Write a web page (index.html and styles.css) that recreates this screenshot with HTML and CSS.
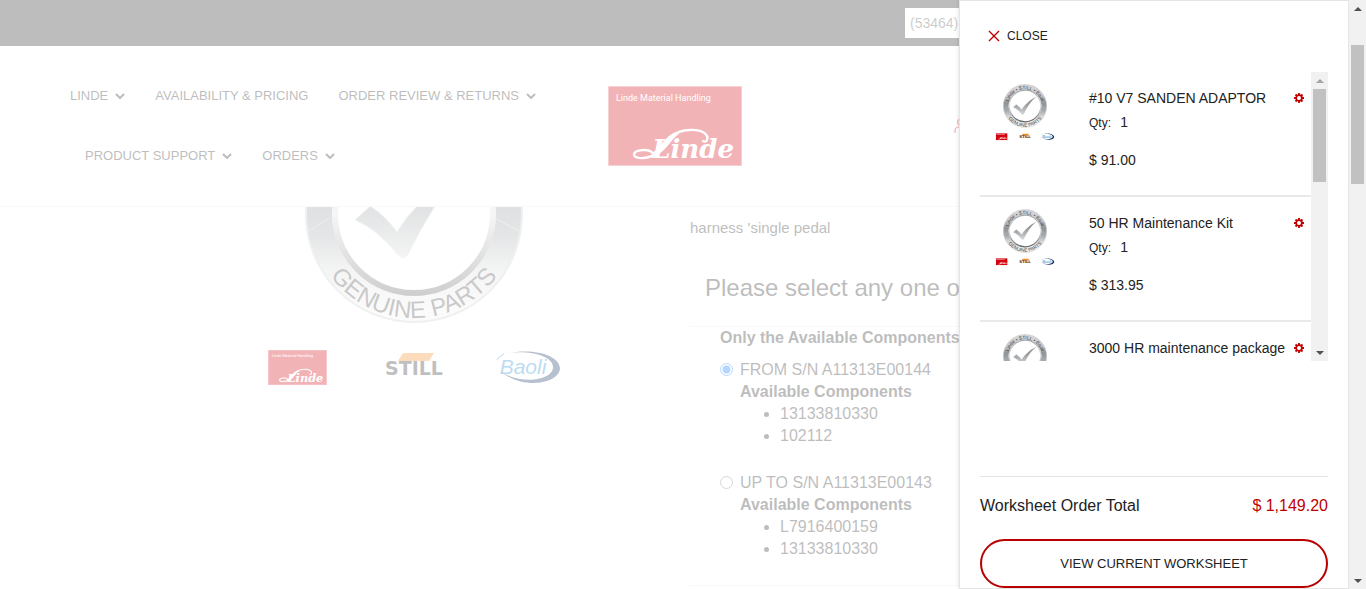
FILE: index.html
```html
<!DOCTYPE html>
<html lang="en">
<head>
<meta charset="utf-8">
<title>Linde Worksheet</title>
<link rel="stylesheet" href="styles.css">
</head>
<body>
<svg class="defs" width="0" height="0" aria-hidden="true">
  <defs>
    <linearGradient id="ring" x1="0" y1="0" x2="0" y2="1">
      <stop offset="0" stop-color="#d4d6d7"/>
      <stop offset=".25" stop-color="#c2c4c6"/>
      <stop offset=".42" stop-color="#8f9396"/>
      <stop offset=".62" stop-color="#a6aaad"/>
      <stop offset=".8" stop-color="#dcdddd"/>
      <stop offset="1" stop-color="#f0f0f0"/>
    </linearGradient>
    <linearGradient id="rim" x1="0" y1="0" x2="0" y2="1">
      <stop offset="0" stop-color="#a5a8aa"/>
      <stop offset=".5" stop-color="#dfe1e2"/>
      <stop offset="1" stop-color="#606060"/>
    </linearGradient>
    <linearGradient id="tick" x1="0" y1="0" x2="0" y2="1">
      <stop offset="0" stop-color="#777b7e"/>
      <stop offset=".5" stop-color="#a0a4a7"/>
      <stop offset="1" stop-color="#d8dadb"/>
    </linearGradient>
    <path id="arc-top" d="M66 110a84 84 0 0 1 168 0"/>
    <path id="arc-bottom" d="M46 110a104 104 0 0 0 208 0"/>
    <symbol id="linde" viewBox="0 0 134 80">
      <rect width="134" height="80" fill="#d4000f"/>
      <rect x=".5" y=".5" width="133" height="79" fill="none" stroke="#e36a70"/>
      <text x="8" y="15" font-family="Roboto, sans-serif" font-size="9" fill="#fff">Linde Material Handling</text>
      <text x="126" y="72" text-anchor="end" font-family="DejaVu Serif, serif" font-size="26" font-style="italic" font-weight="700" fill="#fff">Linde</text>
      <path d="M45 67C40 62 27 64 26 68c0 6 14 5 21 0C55 62 60 45 81 44c14-1 20 5 18 10-1 2-3 2-4 1" fill="none" stroke="#fff" stroke-width="2.4" stroke-linecap="round"/>
      <path d="M43 68C52 62 57 50 68 46l3 2C64 52 60 62 51 68z" fill="#fff"/>
    </symbol>
    <symbol id="genuine" viewBox="0 0 300 290">
      <circle cx="150" cy="110" r="95" fill="none" stroke="url(#ring)" stroke-width="27"/>
      <circle cx="150" cy="110" r="108" fill="none" stroke="#c9cccd" stroke-width="2"/>
      <circle cx="150" cy="110" r="79" fill="none" stroke="url(#rim)" stroke-width="6"/>
      <path d="M43 128l23-14M257 128l-26-14" stroke="#c6c9ca" stroke-width="1"/>
      <path d="M91 116l15-14q15 9 27 26q8-14 20-26 22-23 53-38-22 19-36 40-14 22-26 46-4 7-10 1-20-25-43-35z" fill="url(#tick)" stroke="#d9dbdc" stroke-width="1"/>
      <g font-family="Liberation Sans, sans-serif" font-size="24" fill="#4a4a4a" text-anchor="middle">
        <text><textPath href="#arc-top" startOffset="50%">Linde • STILL • Baoli</textPath></text>
        <text><textPath href="#arc-bottom" startOffset="50%">GENUINE PARTS</textPath></text>
      </g>
      <use href="#linde" x="4" y="246" width="59" height="35"/>
      <path d="M139 249h31l-5 8h-31z" fill="#f68b1f"/>
      <text x="150" y="271" text-anchor="middle" font-family="DejaVu Sans, sans-serif" font-size="19" font-weight="700" fill="#2b2b2b">STILL</text>
      <text x="259" y="270" text-anchor="middle" font-family="Liberation Sans, sans-serif" font-size="21" font-style="italic" fill="#1689cc">Baoli</text>
      <path d="M244 249c26-5 51 2 52 15 0 15-36 23-60 3 20 14 53 10 53-4 0-11-23-17-45-14z" fill="#0c2c5c"/>
      <path d="M240 250q-6 3-7 6" fill="none" stroke="#1689cc" stroke-width="1"/>
    </symbol>
    <symbol id="chevron" viewBox="0 0 10 6"><path d="M1 1l4 4 4-4" fill="none" stroke="currentColor" stroke-width="2"/></symbol>
    <symbol id="gear" viewBox="0 0 20 20">
      <circle cx="10" cy="10" r="5.7" fill="none" stroke="currentColor" stroke-width="3.4"/>
      <path d="M10 0v4M10 16v4M0 10h4M16 10h4M3 3l3 3M14 14l3 3M17 3l-3 3M6 14l-3 3" stroke="currentColor" stroke-width="3.6"/>
    </symbol>
    <symbol id="up" viewBox="0 0 8 4"><path d="M0 4l4-4 4 4z" fill="currentColor"/></symbol>
    <symbol id="down" viewBox="0 0 8 4"><path d="M0 0l4 4 4-4z" fill="currentColor"/></symbol>
  </defs>
</svg>

<div class="site">
  <div class="topbar">
    <input class="account" type="text" value="(53464)" aria-label="Account">
  </div>
  <header class="header">
    <nav class="nav">
      <a href="#">LINDE <svg><use href="#chevron"/></svg></a>
      <a href="#">AVAILABILITY &amp; PRICING</a>
      <a href="#">ORDER REVIEW &amp; RETURNS <svg><use href="#chevron"/></svg></a>
      <a href="#">PRODUCT SUPPORT <svg><use href="#chevron"/></svg></a>
      <a href="#">ORDERS <svg><use href="#chevron"/></svg></a>
    </nav>
    <a class="logo" href="#" aria-label="Linde home"><svg><use href="#linde"/></svg></a>
    <a class="user" href="#" aria-label="My account">
      <svg viewBox="0 0 14 16"><circle cx="7" cy="4" r="3.3"/><path d="M1 15v-2q0-4 4-4h4q4 0 4 4v2"/></svg>
    </a>
  </header>
  <main class="product">
    <div class="gallery"><svg><use href="#genuine"/></svg></div>
    <section class="details">
      <p class="desc">harness 'single pedal</p>
      <h2>Please select any one of the options</h2>
      <div class="options">
        <p class="note">Only the Available Components will be added</p>
        <div class="option">
          <input type="radio" name="serial" id="sn1" checked>
          <div>
            <label for="sn1">FROM S/N A11313E00144</label>
            <b>Available Components</b>
            <ul><li>13133810330</li><li>102112</li></ul>
          </div>
        </div>
        <div class="option">
          <input type="radio" name="serial" id="sn2">
          <div>
            <label for="sn2">UP TO S/N A11313E00143</label>
            <b>Available Components</b>
            <ul><li>L7916400159</li><li>13133810330</li></ul>
          </div>
        </div>
      </div>
    </section>
  </main>
  <div class="overlay"></div>

  <aside class="drawer">
    <button class="close" type="button">
      <svg viewBox="0 0 12 12"><path d="M1 1l10 10M11 1L1 11"/></svg>CLOSE
    </button>
    <div class="cart">
      <div class="items">
        <article class="item">
          <svg class="thumb"><use href="#genuine"/></svg>
          <div class="info">
            <h3>#10 V7 SANDEN ADAPTOR</h3>
            <p class="qty">Qty: <span>1</span></p>
            <p class="price">$ 91.00</p>
          </div>
          <button class="edit" type="button" aria-label="Options"><svg><use href="#gear"/></svg></button>
        </article>
        <article class="item">
          <svg class="thumb"><use href="#genuine"/></svg>
          <div class="info">
            <h3>50 HR Maintenance Kit</h3>
            <p class="qty">Qty: <span>1</span></p>
            <p class="price">$ 313.95</p>
          </div>
          <button class="edit" type="button" aria-label="Options"><svg><use href="#gear"/></svg></button>
        </article>
        <article class="item">
          <svg class="thumb"><use href="#genuine"/></svg>
          <div class="info">
            <h3>3000 HR maintenance package</h3>
          </div>
          <button class="edit" type="button" aria-label="Options"><svg><use href="#gear"/></svg></button>
        </article>
      </div>
      <div class="bar bar-list" aria-hidden="true">
        <svg class="faded"><use href="#up"/></svg><i></i><svg><use href="#down"/></svg>
      </div>
    </div>
    <div class="summary">
      <div class="total"><span>Worksheet Order Total</span><strong>$ 1,149.20</strong></div>
      <a class="view" href="#">VIEW CURRENT WORKSHEET</a>
    </div>
  </aside>
</div>
<div class="bar bar-page" aria-hidden="true">
  <svg><use href="#up"/></svg><i></i><svg><use href="#down"/></svg>
</div>
</body>
</html>
```

FILE: styles.css
```css
* { box-sizing: border-box; }
body {
  margin: 0;
  display: flex;
  height: 100vh;
  overflow: hidden;
  font: 16px/22px "Liberation Sans", Arial, sans-serif;
  color: #222;
  background: #fff;
}
p, h2, h3, ul { margin: 0; font-weight: 400; }
a { color: inherit; text-decoration: none; }
button { padding: 0; border: 0; background: none; font: inherit; color: inherit; }
svg { display: block; }
.defs { position: absolute; }

.site {
  position: relative;
  flex: 1;
  min-width: 0;
  display: flex;
  flex-direction: column;
  overflow: hidden;
}
.overlay { position: absolute; inset: 0; background: rgba(255, 255, 255, .7); }

.topbar { display: flex; justify-content: flex-end; padding: 8px 70px 8px 0; background: #222; }
.account {
  width: 374px;
  height: 30px;
  padding: 0 5px;
  border: 0;
  background: #fff;
  color: #555;
  font: 14px "Liberation Sans", Arial, sans-serif;
}

.header {
  display: grid;
  grid-template-columns: 1fr 134px 1fr;
  align-items: center;
  padding: 20px 0;
  border-bottom: 1px solid #eaeaea;
  background: #fff;
}
.nav { display: flex; flex-wrap: wrap; padding-left: 70px; font-size: 13px; line-height: 60px; }
.nav a { display: flex; align-items: center; gap: 7px; padding: 0 15px; }
.nav a:first-child { padding-left: 0; }
.nav svg { width: 10px; height: 6px; }
.logo svg { width: 134px; height: 80px; }
.user { padding-left: 212px; color: #c00; }
.user svg { width: 14px; height: 16px; fill: none; stroke: currentColor; stroke-width: 1.2; }

.product { flex: 1; min-height: 0; display: flex; overflow: hidden; }
.gallery { width: 690px; padding-left: 264px; }
.gallery svg { width: 300px; height: 290px; margin-top: -103px; }
.details { flex: 1; min-width: 0; white-space: nowrap; }
.desc { padding-top: 10px; font-size: 15px; }
.details h2 { padding: 33px 15px 22px; font-size: 24px; line-height: 32px; }
.options { padding: 0 30px 25px; border: solid #eaeaea; border-width: 1px 0; }
.note { font-weight: 700; }
.option { display: flex; gap: 7px; padding-top: 10px; }
.option + .option { padding-top: 25px; }
.option input { width: 13px; height: 13px; margin: 4px 0 0; }
.option label, .option b { display: block; }
.option ul { padding-left: 40px; }

.drawer {
  position: absolute;
  top: 0;
  right: 0;
  bottom: 0;
  width: 390px;
  display: flex;
  flex-direction: column;
  padding: 25px 20px 0;
  border: 1px solid #e5e5e5;
  background: #fff;
  box-shadow: 0 0 4px rgba(0, 0, 0, .15);
}
.close { display: flex; align-items: center; align-self: flex-start; gap: 7px; padding-left: 8px; font-size: 12px; line-height: 20px; }
.close svg { width: 12px; height: 12px; fill: none; stroke: #c00000; stroke-width: 1.4; }
.cart { display: flex; height: 289px; margin-top: 26px; }
.items { flex: 1; overflow: hidden; }
.item { display: flex; height: 125px; padding: 12px 7px 0 15px; border-bottom: 2px solid #e9e9e9; }
.thumb { width: 60px; height: 58px; flex: none; }
.info { flex: 1; padding: 4px 0 0 34px; white-space: nowrap; }
.info h3 { font-size: 14px; line-height: 20px; }
.qty { padding-top: 4px; font-size: 12px; line-height: 20px; }
.qty span { padding-left: 6px; font-size: 14px; }
.price { padding-top: 17px; font-size: 14px; line-height: 20px; }
.edit { align-self: flex-start; padding-top: 9px; color: #c00000; }
.edit svg { width: 10px; height: 10px; }
.summary { margin-top: auto; border-top: 1px solid #e5e5e5; }
.total { display: flex; justify-content: space-between; padding: 18px 0 22px; }
.total strong { font-weight: 400; color: #c00000; }
.view {
  display: block;
  border: 2px solid #b90000;
  border-radius: 25px;
  font-size: 13px;
  line-height: 45px;
  text-align: center;
}

.bar { width: 17px; flex: none; display: flex; flex-direction: column; align-items: center; background: #f1f1f1; color: #505050; }
.bar svg { width: 8px; height: 4px; flex: none; margin: 7px 0 6px; }
.bar .faded { color: #a3a3a3; }
.bar i { width: 13px; background: #c1c1c1; }
.bar svg:last-child { margin-top: auto; }
.bar-list i { height: 93px; }
.bar-page i { height: 139px; margin-top: 28px; }
```
